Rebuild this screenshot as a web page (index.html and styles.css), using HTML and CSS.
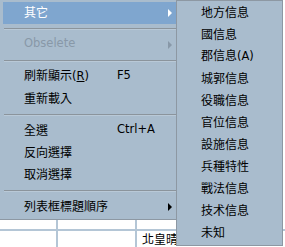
FILE: index.html
```html
<!DOCTYPE html>
<html lang="zh-Hant">
<head>
    <meta charset="UTF-8">
    <title>右鍵選單</title>
    <link rel="stylesheet" href="styles.css">
</head>
<body>
<div class="screen">
    <ul class="menu main-menu">
        <li class="item active has-sub"><span class="label">其它</span></li>
        <li class="sep"></li>
        <li class="item disabled has-sub"><span class="label latin">Obselete</span></li>
        <li class="sep"></li>
        <li class="item"><span class="label">刷新顯示<span class="latin">(<u>R</u>)</span></span><span class="key">F5</span></li>
        <li class="item"><span class="label">重新載入</span></li>
        <li class="sep"></li>
        <li class="item"><span class="label">全選</span><span class="key">Ctrl+A</span></li>
        <li class="item"><span class="label">反向選擇</span></li>
        <li class="item"><span class="label">取消選擇</span></li>
        <li class="sep"></li>
        <li class="item has-sub"><span class="label">列表框標題順序</span></li>
    </ul>

    <!-- 下方的列表 -->
    <div class="grid">
        <div class="grid-row">
            <div class="cell c1"></div>
            <div class="cell c2"></div>
            <div class="cell c3"></div>
        </div>
        <div class="grid-row">
            <div class="cell c1"></div>
            <div class="cell c2"></div>
            <div class="cell c3">北皇晴</div>
        </div>
    </div>

    <ul class="menu sub-menu">
        <li class="item"><span class="label">地方信息</span></li>
        <li class="item"><span class="label">國信息</span></li>
        <li class="item"><span class="label">郡信息<span class="latin">(A)</span></span></li>
        <li class="item"><span class="label">城郭信息</span></li>
        <li class="item"><span class="label">役職信息</span></li>
        <li class="item"><span class="label">官位信息</span></li>
        <li class="item"><span class="label">設施信息</span></li>
        <li class="item"><span class="label">兵種特性</span></li>
        <li class="item"><span class="label">戰法信息</span></li>
        <li class="item"><span class="label">技术信息</span></li>
        <li class="item"><span class="label">未知</span></li>
    </ul>
</div>
</body>
</html>
```

FILE: styles.css
```css
body {
    margin: 0;
    font-family: "Noto Sans CJK TC", "DejaVu Sans", sans-serif;
    font-size: 12px;
    color: #000;
}

.screen {
    position: relative;
    width: 285px;
    height: 247px;
    overflow: hidden;
    background-color: #fff;
}

.menu {
    list-style: none;
    margin: 0;
    background-color: #a9bccd;
    box-sizing: border-box;
}

.main-menu {
    width: 177px;
    height: 220px;
    padding: 2px 0 0 3px;
    border-right: 1px solid #8d98a3;
    border-bottom: 1px solid #8d98a3;
}

.item {
    position: relative;
    display: flex;
    align-items: center;
    height: 22px;
    padding-bottom: 3px;
    box-sizing: border-box;
}

.label {
    width: 93px;
    padding-left: 21px;
    line-height: 1;
}

.latin,
.key {
    font-family: "DejaVu Sans", sans-serif;
    font-size: 11.5px;
}

.key {
    line-height: 1;
}

.item.active {
    background-color: #7fa6cf;
    color: #fff;
}

.item.disabled {
    color: #8898a8;
}

.sep {
    height: 10px;
    padding-top: 4px;
    margin-left: 1px;
    box-sizing: border-box;
}

.sep::before {
    content: "";
    display: block;
    height: 1px;
    background-color: #8b949c;
    border-bottom: 1px solid #b9c9d7;
}

.has-sub::after {
    content: "";
    position: absolute;
    right: 4px;
    top: 7px;
    border-top: 4px solid transparent;
    border-bottom: 4px solid transparent;
    border-left: 4px solid #000;
}

.item.active::after {
    border-left-color: #fff;
}

.item.disabled::after {
    border-left-color: #8898a8;
}

.grid {
    display: flex;
    flex-direction: column;
}

.grid-row {
    display: flex;
    height: 9px;
    border-bottom: 2px solid #b4c6d6;
}

.grid-row + .grid-row {
    height: 20px;
    border-bottom: none;
}

.cell {
    border-right: 2px solid #b4c6d6;
    line-height: 1;
    padding-top: 2px;
    box-sizing: border-box;
}

.c1 { width: 58px; }
.c2 { width: 79px; }
.c3 { flex: 1; padding-left: 5px; border-right: none; }

.sub-menu {
    position: absolute;
    left: 176px;
    top: 0;
    width: 107px;
    height: 246px;
    padding: 1px 0 0 0;
    border: 1px solid #8d98a3;
}

.sub-menu .label {
    width: auto;
    padding-left: 24px;
}
```
